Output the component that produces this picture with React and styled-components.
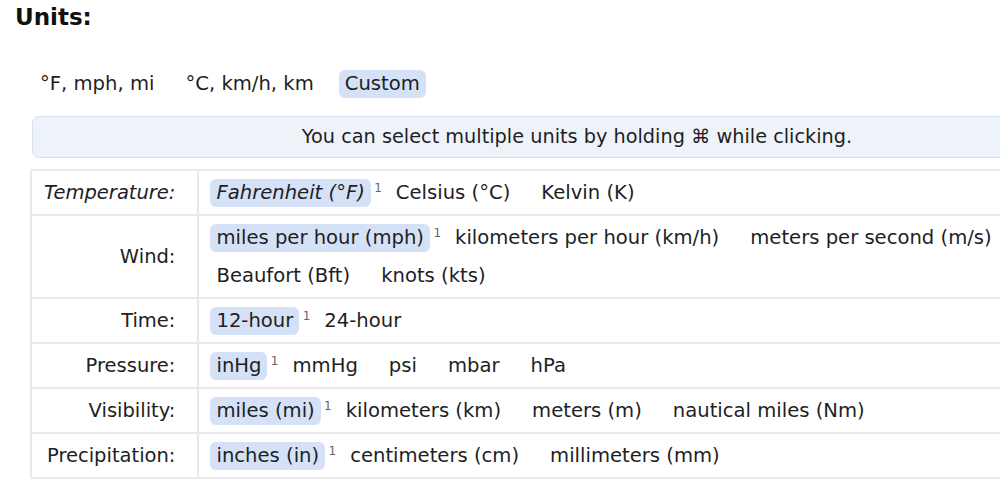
import React from "react";
import styled, { createGlobalStyle } from "styled-components";

const GlobalStyle = createGlobalStyle`
  html, body {
    margin: 0;
    padding: 0;
    background: #ffffff;
    overflow: hidden;
  }
  body {
    font-family: "DejaVu Sans", Verdana, sans-serif;
    color: #222;
  }
`;

const Page = styled.div`
  padding: 4px 0 0 15px;
  width: 1200px;
`;

const Heading = styled.h2`
  margin: 0;
  font-size: 23px;
  line-height: 27px;
  font-weight: bold;
  color: #111;
`;

const Section = styled.div`
  padding-left: 15px;
`;

const PresetRow = styled.div`
  display: flex;
  gap: 19px;
  margin-top: 39px;
  padding-left: 4px;
`;

const Option = styled.span`
  position: relative;
  display: inline-block;
  padding: 3px 6px;
  line-height: 22px;
  border-radius: 6px;
  white-space: nowrap;
  font-size: 19.6px;
  font-style: ${(p) => (p.$italic ? "italic" : "normal")};
  background: ${(p) => (p.$selected ? "#d5e1f7" : "transparent")};
  color: #1e1e24;
`;

const Note = styled.sup`
  position: absolute;
  right: -11px;
  top: 3px;
  font-size: 12px;
  line-height: 12px;
  font-style: normal;
  color: #666;
`;

const InfoBox = styled.div`
  margin-top: 18px;
  margin-left: 2px;
  width: 1090px;
  box-sizing: border-box;
  border: 1px solid #d3e0ef;
  border-radius: 7px;
  background: #eef3fa;
  padding: 9px 0;
  text-align: center;
  font-size: 19.3px;
  line-height: 22px;
  color: #1e1e24;
`;

const Table = styled.table`
  margin-top: 11px;
  width: 1040px;
  border-collapse: collapse;
`;

const LabelCell = styled.td`
  width: 127px;
  border: 2px solid #e9e9e9;
  padding: 8px 22px 7px 12px;
  text-align: right;
  vertical-align: middle;
  font-size: 19.5px;
  line-height: 22px;
  white-space: nowrap;
  font-style: ${(p) => (p.$italic ? "italic" : "normal")};
  color: #1e1e24;
`;

const ValueCell = styled.td`
  border: 2px solid #e9e9e9;
  border-right: none;
  padding: 8px 12px 7px 11px;
  vertical-align: middle;
`;

const Options = styled.div`
  display: flex;
  flex-wrap: wrap;
  column-gap: 19px;
  row-gap: 10px;
`;

const rows = [
  {
    label: "Temperature:",
    italic: true,
    options: ["Fahrenheit (°F)", "Celsius (°C)", "Kelvin (K)"],
  },
  {
    label: "Wind:",
    options: [
      "miles per hour (mph)",
      "kilometers per hour (km/h)",
      "meters per second (m/s)",
      "Beaufort (Bft)",
      "knots (kts)",
    ],
  },
  { label: "Time:", options: ["12-hour", "24-hour"] },
  { label: "Pressure:", options: ["inHg", "mmHg", "psi", "mbar", "hPa"] },
  {
    label: "Visibility:",
    options: ["miles (mi)", "kilometers (km)", "meters (m)", "nautical miles (Nm)"],
  },
  {
    label: "Precipitation:",
    options: ["inches (in)", "centimeters (cm)", "millimeters (mm)"],
  },
];

export default function App() {
  return (
    <>
      <GlobalStyle />
      <Page>
        <Heading>Units:</Heading>
        <Section>
          <PresetRow>
            <Option>°F, mph, mi</Option>
            <Option>°C, km/h, km</Option>
            <Option $selected>Custom</Option>
          </PresetRow>
          <InfoBox>You can select multiple units by holding ⌘ while clicking.</InfoBox>
          <Table>
            <tbody>
              {rows.map((row) => (
                <tr key={row.label}>
                  <LabelCell $italic={row.italic}>{row.label}</LabelCell>
                  <ValueCell>
                    <Options>
                      {row.options.map((opt, i) => (
                        <Option key={opt} $selected={i === 0} $italic={row.italic && i === 0}>
                          {opt}
                          {i === 0 && <Note>1</Note>}
                        </Option>
                      ))}
                    </Options>
                  </ValueCell>
                </tr>
              ))}
            </tbody>
          </Table>
        </Section>
      </Page>
    </>
  );
}
